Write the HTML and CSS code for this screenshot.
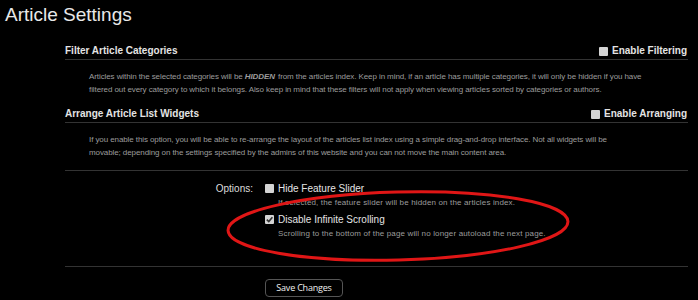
FILE: index.html
```html
<!DOCTYPE html>
<html lang="en">
<head>
    <meta charset="UTF-8">
    <title>Article Settings</title>
    <link rel="stylesheet" href="styles.css">
</head>
<body>
<div class="page">
    <h1 class="page-title">Article Settings</h1>

    <div class="settings">
        <!-- Filter -->
        <div class="section-head">
            <span class="section-title">Filter Article Categories</span>
            <label class="toggle"><span class="box"></span>Enable Filtering</label>
        </div>
        <p class="section-desc">Articles within the selected categories will be <em class="strong">HIDDEN</em> from the articles index. Keep in mind, if an article has multiple categories, it will only be hidden if you have<br>filtered out every category to which it belongs. Also keep in mind that these filters will not apply when viewing articles sorted by categories or authors.</p>

        <!-- Arrange -->
        <div class="section-head">
            <span class="section-title">Arrange Article List Widgets</span>
            <label class="toggle"><span class="box"></span>Enable Arranging</label>
        </div>
        <p class="section-desc">If you enable this option, you will be able to re-arrange the layout of the articles list index using a simple drag-and-drop interface. Not all widgets will be<br>movable; depending on the settings specified by the admins of this website and you can not move the main content area.</p>

        <div class="options">
            <div class="options-label">Options:</div>
            <div class="options-list">
                <label class="option"><span class="box"></span>Hide Feature Slider</label>
                <div class="option-hint">If selected, the feature slider will be hidden on the articles index.</div>
                <label class="option"><span class="box checked"><svg viewBox="0 0 9 9" width="9" height="9"><path d="M1.8 4.6 L3.8 6.6 L7.4 2.2" fill="none" stroke="#333" stroke-width="1.6"/></svg></span>Disable Infinite Scrolling</label>
                <div class="option-hint">Scrolling to the bottom of the page will no longer autoload the next page.</div>
            </div>
        </div>

        <div class="actions">
            <button class="save-btn">Save Changes</button>
        </div>
    </div>

    <!-- rote Markierung -->
    <svg class="marker" width="698" height="300" viewBox="0 0 698 300">
        <ellipse cx="398" cy="226" rx="170" ry="34" transform="rotate(-1.5 398 226)" fill="none" stroke="#e01616" stroke-width="3"/>
    </svg>
</div>
</body>
</html>
```

FILE: styles.css
```css
body {
    margin: 0;
    background: #000;
    color: #ddd;
    font-family: "Liberation Sans", Arial, sans-serif;
}

.page {
    position: relative;
    width: 698px;
    height: 300px;
    overflow: hidden;
}

.page-title {
    margin: 0;
    padding: 4px 0 0 5px;
    font-size: 19px;
    font-weight: normal;
    line-height: 22px;
    color: #e8e8e8;
}

.settings {
    margin-left: 65px;
    width: 623px;
}

/* Abschnittskopf mit Checkbox rechts */
.section-head {
    display: flex;
    justify-content: space-between;
    align-items: center;
    margin-top: 18px;
    padding-bottom: 1px;
    border-bottom: 1px solid #333;
    line-height: 14px;
    font-size: 10px;
    font-weight: bold;
    color: #e4e4e4;
}

.section-desc + .section-head {
    margin-top: 11px;
}

.toggle {
    display: flex;
    align-items: center;
    gap: 4px;
    padding-right: 1px;
}

.box {
    display: inline-block;
    width: 9px;
    height: 9px;
    background: #d4d4d4;
    border-radius: 1px;
}

.box svg {
    display: block;
}

.section-desc {
    margin: 10px 0 0;
    padding: 0 0 0 24px;
    font-size: 8px;
    letter-spacing: -0.09px;
    line-height: 13px;
    white-space: nowrap;
    color: #9c9c9c;
}

.strong {
    font-weight: bold;
    margin-right: 1px;
}

/* Optionen */
.options {
    display: flex;
    margin-top: 11px;
    padding-top: 11px;
    border-top: 1px solid #333;
}

.options-label {
    width: 188px;
    padding-right: 12px;
    text-align: right;
    font-size: 10px;
    line-height: 14px;
    color: #ddd;
}

.options-list {
    flex: 1;
}

.option {
    display: flex;
    align-items: center;
    gap: 4px;
    font-size: 10px;
    line-height: 14px;
    color: #e4e4e4;
}

.option .box {
    position: relative;
    top: -1px;
}

.option-hint {
    padding-left: 13px;
    margin-bottom: 4px;
    font-size: 8px;
    letter-spacing: 0.15px;
    line-height: 13px;
    color: #9c9c9c;
}

.actions {
    margin-top: 22px;
    padding-top: 10px;
    border-top: 1px solid #333;
}

.save-btn {
    margin-left: 200px;
    width: 78px;
    height: 18px;
    padding: 0;
    background: #000;
    border: 1px solid #555;
    border-radius: 4px;
    color: #f0f0f0;
    font-family: "Open Sans", sans-serif;
    font-size: 9px;
    letter-spacing: -0.2px;
}

.marker {
    position: absolute;
    left: 0;
    top: 0;
    pointer-events: none;
}
```
